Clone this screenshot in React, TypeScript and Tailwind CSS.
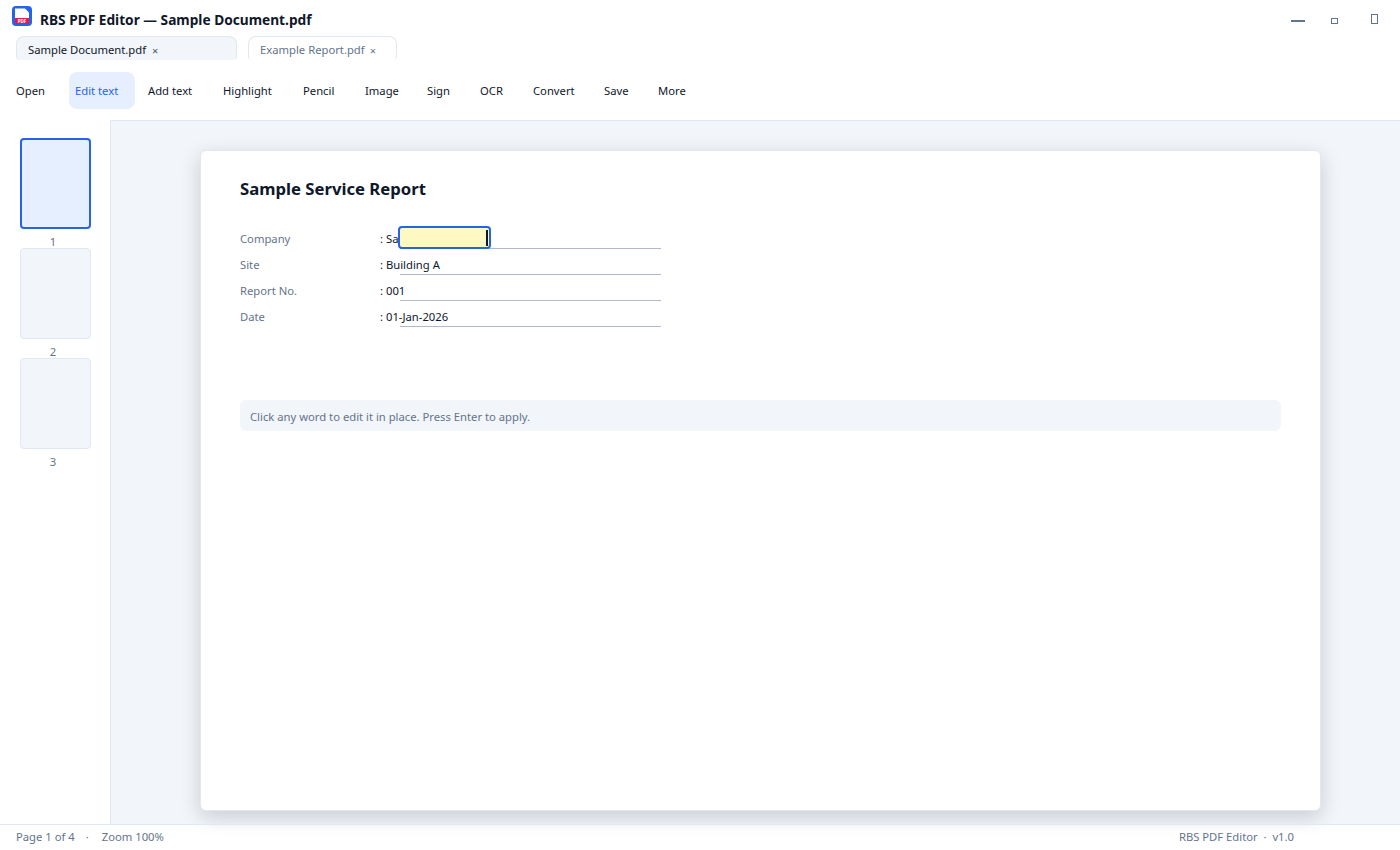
const tools = [
  { label: "Open", width: "w-[59px]" },
  { label: "Edit text", width: "w-[66px] mr-[7px] bg-[#e6efff] text-[#2563eb]" },
  { label: "Add text", width: "w-[75px]" },
  { label: "Highlight", width: "w-[80px]" },
  { label: "Pencil", width: "w-[62px]" },
  { label: "Image", width: "w-[62px]" },
  { label: "Sign", width: "w-[53px]" },
  { label: "OCR", width: "w-[53px]" },
  { label: "Convert", width: "w-[71px]" },
  { label: "Save", width: "w-[54px]" },
  { label: "More", width: "w-[54px]" },
];

const fields = [
  { label: "Company", value: "Sa" },
  { label: "Site", value: "Building A" },
  { label: "Report No.", value: "001" },
  { label: "Date", value: "01-Jan-2026" },
];

const pages = [1, 2, 3];

const App = () => {
  return (
    <div className="h-[850px] w-[1400px] flex flex-col bg-white overflow-hidden text-[11.25px] text-[#0f172a] font-['Noto_Sans',sans-serif]">
      <header className="h-[36px] flex items-start shrink-0">
        <svg className="ml-[12px] mt-[6px]" width="20" height="20" viewBox="0 0 20 20">
          <rect x="0" y="0" width="20" height="20" rx="4" fill="#2563eb" />
          <path d="M3 2.5h10l4 4V12H3z" fill="#fff" />
          <rect x="3" y="12" width="14" height="6" fill="#e11d48" />
          <text x="10" y="16.6" textAnchor="middle" fontSize="4.5" fontWeight="700" fill="#fff">PDF</text>
        </svg>
        <h1 className="ml-[8px] mt-[11px] text-[13.7px] leading-[18px] font-bold">RBS PDF Editor — Sample Document.pdf</h1>
        <div className="ml-auto flex items-start">
          <div className="mt-[20px] mr-[26px] w-[14px] h-[2px] bg-[#64748b]" />
          <div className="mt-[18px] mr-[33px] w-[7px] h-[6px] border border-[#64748b]" />
          <div className="mt-[14px] mr-[22px] w-[7px] h-[10px] border border-[#64748b]" />
        </div>
      </header>

      <div className="h-[24px] pl-[16px] flex gap-[11px] shrink-0">
        <div className="w-[221px] h-[24px] pl-[11px] pt-[3px] flex items-center gap-[6px] rounded-t-[8px] rounded-b-[4px] border border-b-0 border-[#e2e8f0] bg-[#f2f5f9] leading-none">
          Sample Document.pdf <span className="text-[11px] text-[#475569]">×</span>
        </div>
        <div className="w-[149px] h-[24px] pl-[11px] pt-[3px] flex items-center gap-[5px] rounded-t-[8px] rounded-b-[4px] border border-b-0 border-[#e2e8f0] bg-white text-[#64748b] leading-none">
          Example Report.pdf <span className="text-[11px]">×</span>
        </div>
      </div>

      <nav className="h-[60px] flex items-center pl-[10px] shrink-0">
        {tools.map((tool) => (
          <button key={tool.label} className={`h-[37px] px-[6px] pt-[2px] text-left rounded-[8px] ${tool.width}`}>
            {tool.label}
          </button>
        ))}
      </nav>

      <div className="flex-1 flex min-h-0">
        <aside className="w-[110px] pt-[18px] pl-[20px] flex flex-col shrink-0">
          {pages.map((page) => (
            <div key={page} className="w-[71px] flex flex-col items-center">
              <div
                className={`w-[71px] h-[91px] rounded-[4px] ${
                  page === 1 ? "border-2 border-[#2563eb] bg-[#e6efff]" : "border border-[#e2e8f0] bg-[#f2f5f9]"
                }`}
              />
              <span className="h-[19px] pr-[5px] pt-[3px] text-[11.25px] leading-[19px] text-[#64748b]">{page}</span>
            </div>
          ))}
        </aside>

        <main className="flex-1 bg-[#f2f5f9] border-t border-l border-[#e2e8f0] pt-[29px] pl-[89px]">
          <div className="w-[1121px] h-[661px] bg-white rounded-[6px] border border-[#e2e8f0] px-[39px] pt-[26px] shadow-[0_6px_20px_rgba(15,23,42,0.18)]">
            <h2 className="text-[16.7px] leading-[24px] font-bold">Sample Service Report</h2>
            <div className="mt-[22px] relative">
              {fields.map((field) => (
                <div key={field.label} className="h-[26px] flex items-start leading-[20px]">
                  <span className="w-[140px] pt-[6px] text-[#64748b]">{field.label}</span>
                  <span className="relative w-[281px] h-[26px] pt-[6px]">
                    : {field.value}
                    <span className="absolute left-[20px] right-0 bottom-0 h-px bg-[#aeb9cb]" />
                  </span>
                </div>
              ))}
              <div className="absolute left-[158px] top-[3px] w-[93px] h-[23px] rounded-[4px] border-2 border-[#2563eb] bg-[#fef9c3] flex items-center justify-end pr-[1px]">
                <div className="w-[2px] h-[16px] bg-[#0f172a]" />
              </div>
            </div>
            <div className="mt-[73px] h-[31px] w-[1041px] px-[10px] pt-[4px] flex items-center rounded-[6px] bg-[#f2f5f9] text-[#64748b]">
              Click any word to edit it in place. Press Enter to apply.
            </div>
          </div>
        </main>
      </div>

      <footer className="h-[26px] border-t border-[#e2e8f0] flex items-center pl-[16px] pr-[106px] text-[#64748b] shrink-0">
        <span>Page 1 of 4</span>
        <span className="ml-[11px] mr-[13px]">·</span>
        <span>Zoom 100%</span>
        <span className="ml-auto">RBS PDF Editor&nbsp;&nbsp;·&nbsp;&nbsp;v1.0</span>
      </footer>
    </div>
  );
};

export default App;
